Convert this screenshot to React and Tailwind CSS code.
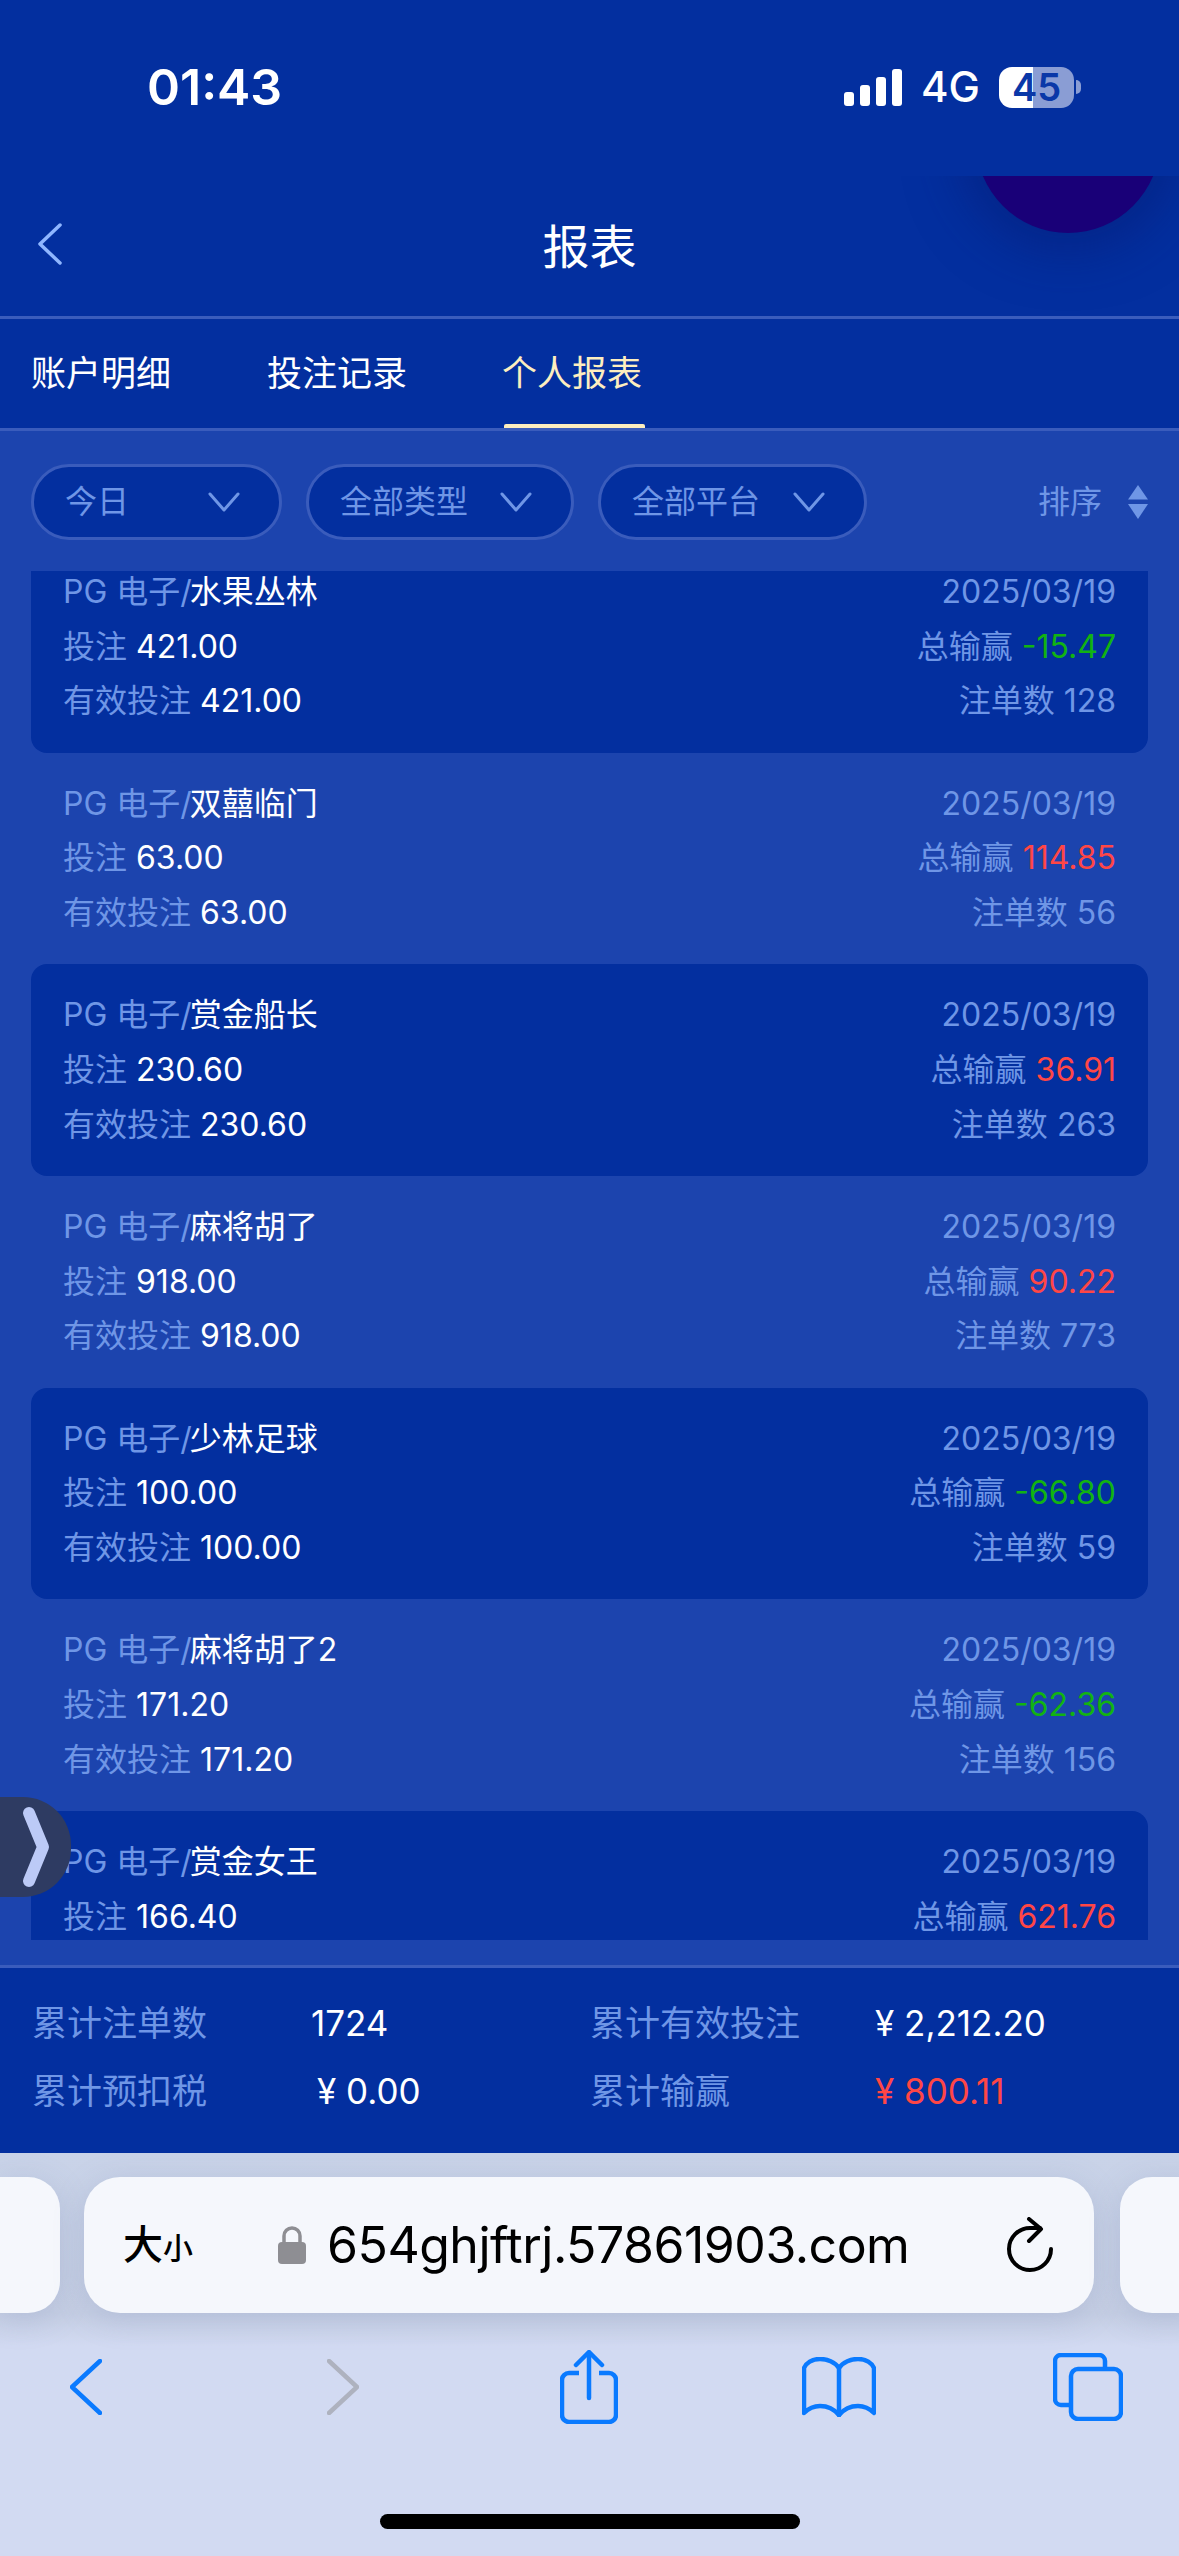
const FONT = "font-['Inter','Noto_Sans_CJK_SC',sans-serif]";

const records = [
  { game: '水果丛林', stake: '421.00', net: '-15.47', count: '128' },
  { game: '双囍临门', stake: '63.00', net: '114.85', count: '56' },
  { game: '赏金船长', stake: '230.60', net: '36.91', count: '263' },
  { game: '麻将胡了', stake: '918.00', net: '90.22', count: '773' },
  { game: '少林足球', stake: '100.00', net: '-66.80', count: '59' },
  { game: '麻将胡了2', stake: '171.20', net: '-62.36', count: '156' },
  { game: '赏金女王', stake: '166.40', net: '621.76', count: '88' },
];

function FilterPill({ label, width }) {
  return (
    <div
      className="h-[76px] flex items-center justify-between rounded-[38px] border-[3px] border-[#3a5cbc] bg-[#032f9f] pl-[31px] pr-[39px] text-[#6f96e6]"
      style={{ width }}
    >
      <span className="text-[32px]">{label}</span>
      <svg width="32" height="22" viewBox="0 0 32 22" fill="none" stroke="#6f96e6" strokeWidth="3" strokeLinecap="round" strokeLinejoin="round">
        <path d="M2 3 L16 19 L30 3" />
      </svg>
    </div>
  );
}

function RecordRow({ row, index }) {
  const loss = row.net.startsWith('-');
  return (
    <div className={`h-[211.7px] shrink-0 rounded-[16px] px-[32px] pt-[24px] text-[32px] leading-[54.7px] text-[#6f96e6] ${index % 2 === 0 ? 'bg-[#032f9f]' : ''}`}>
      <div className="flex justify-between">
        <span>PG 电子/<span className="-ml-[2px] text-white">{row.game}</span></span>
        <span>2025/03/19</span>
      </div>
      <div className="flex justify-between">
        <span>投注 <span className="text-white">{row.stake}</span></span>
        <span>总输赢 <span className={loss ? 'text-[#12b312]' : 'text-[#ff4646]'}>{row.net}</span></span>
      </div>
      <div className="flex justify-between">
        <span>有效投注 <span className="text-white">{row.stake}</span></span>
        <span>注单数 {row.count}</span>
      </div>
    </div>
  );
}

function StatusBar() {
  return (
    <div className="relative z-10 h-[176px] shrink-0 bg-[#032f9f] text-white">
      <div className="flex items-center pl-[147px] pr-[98px] pt-[60px]">
        <span className="text-[50px] font-semibold leading-[54px]">01:43</span>
        <div className="ml-auto flex items-center">
          <svg width="58" height="37" viewBox="0 0 58 37" fill="white">
            <rect x="0" y="23" width="10" height="14" rx="3" />
            <rect x="16" y="16" width="10" height="21" rx="3" />
            <rect x="32" y="8" width="10" height="29" rx="3" />
            <rect x="48" y="0" width="10" height="37" rx="3" />
          </svg>
          <span className="ml-[19px] text-[42px] font-medium leading-[40px]">4G</span>
          <div className="ml-[19px] flex h-[41px] w-[75px] items-center justify-center rounded-[13px] bg-[linear-gradient(90deg,#ffffff_45%,#8a9dd4_45%)] text-[38px] font-semibold text-[#0a38a8]">45</div>
          <div className="ml-[2px] h-[14px] w-[5px] rounded-r-full bg-[#8a9dd4]" />
        </div>
      </div>
    </div>
  );
}

function NavBar() {
  return (
    <div className="relative flex h-[143px] shrink-0 items-center justify-center border-b-[3px] border-[#3a5cbc] bg-[#032f9f] text-white">
      <div className="absolute left-[976px] top-[-127px] h-[184px] w-[184px] rounded-full bg-[#190078] shadow-[0_0_50px_20px_rgba(5,30,120,0.55)]" />
      <svg className="absolute left-[37px] top-[47px]" width="26" height="42" viewBox="0 0 26 42" fill="none" stroke="#8fb6ff" strokeWidth="3.5" strokeLinecap="round" strokeLinejoin="round">
        <path d="M23 2 L3 21 L23 40" />
      </svg>
      <span className="relative text-[47px] leading-none">报表</span>
    </div>
  );
}

function TabBar() {
  return (
    <div className="relative flex h-[112px] shrink-0 items-start border-b-[3px] border-[#3a5cbc] bg-[#032f9f] pl-[31px] pt-[28px] text-[35px] leading-[52px] text-white">
      <span>账户明细</span>
      <span className="ml-[96px]">投注记录</span>
      <span className="ml-[95px] text-[#fdeebf]">个人报表</span>
      <div className="absolute bottom-0 left-[504px] h-[4px] w-[141px] rounded-t-[2px] bg-[#fdeebf]" />
    </div>
  );
}

function FilterBar() {
  return (
    <div className="flex h-[140px] shrink-0 items-start gap-[24px] pl-[31px] pr-[31px] pt-[33px]">
      <FilterPill label="今日" width={251} />
      <FilterPill label="全部类型" width={268} />
      <FilterPill label="全部平台" width={269} />
      <div className="ml-auto flex h-[76px] items-center text-[32px] text-[#6f96e6]">
        <span>排序</span>
        <svg className="ml-[26px]" width="20" height="34" viewBox="0 0 20 34" fill="#6f96e6">
          <path d="M10 0 L20 14.5 L0 14.5 Z" />
          <path d="M0 19 L20 19 L10 34 Z" />
        </svg>
      </div>
    </div>
  );
}

function Totals() {
  return (
    <div className="h-[188px] shrink-0 border-t-[3px] border-[#3a5cbc] bg-[#032f9f] pl-[32px] pt-[21px] text-[35px] leading-[68px] text-[#6f96e6]">
      <div className="grid grid-cols-[279px_279px_285px_1fr]">
        <span>累计注单数</span>
        <span className="text-white">1724</span>
        <span>累计有效投注</span>
        <span className="text-white">¥ 2,212.20</span>
        <span>累计预扣税</span>
        <span className="pl-[6px] text-white">¥ 0.00</span>
        <span>累计输赢</span>
        <span className="text-[#ff4646]">¥ 800.11</span>
      </div>
    </div>
  );
}

function BrowserChrome() {
  return (
    <div className="flex h-[403px] shrink-0 flex-col bg-[linear-gradient(180deg,#c9d3e8_0%,#c6cfe4_40%,#d2daf2_48%,#d2daf2_100%)]">
      <div className="mt-[24px] flex h-[136px] shrink-0">
        <div className="h-full w-[60px] shrink-0 rounded-r-[32px] bg-[#f5f7fc] shadow-[0_6px_30px_rgba(120,135,180,0.25)]" />
        <div className="ml-[24px] flex h-full w-[1010px] shrink-0 items-center rounded-[36px] bg-[#f5f7fc] pl-[39px] pr-[40px] text-black shadow-[0_6px_30px_rgba(120,135,180,0.25)]">
          <span className="w-[155px] shrink-0 font-medium leading-none">
            <span className="text-[40px]">大</span><span className="text-[30px]">小</span>
          </span>
          <svg width="28" height="38" viewBox="0 0 28 38" fill="none">
            <path d="M6 18 V10 a8 8 0 0 1 16 0 V18" stroke="#8e8e93" strokeWidth="3.5" />
            <rect x="0" y="16" width="28" height="22" rx="4" fill="#8e8e93" />
          </svg>
          <span className="ml-[21px] text-[50px] leading-none tracking-[-0.5px]">654ghjftrj.57861903.com</span>
          <svg className="ml-auto" width="48" height="56" viewBox="0 0 48 56" fill="none" stroke="black" strokeWidth="4" strokeLinecap="round" strokeLinejoin="round">
            <path d="M45 32 A21 21 0 1 1 24 11 H34" />
            <path d="M23 2 L35 12 L23 24" />
          </svg>
        </div>
        <div className="ml-[26px] h-full w-[80px] shrink-0 rounded-l-[32px] bg-[#f5f7fc] shadow-[0_6px_30px_rgba(120,135,180,0.25)]" />
      </div>
      <div className="relative mt-[37px] flex h-[74px] shrink-0 items-center pl-[70px]">
        <svg width="32" height="56" viewBox="0 0 32 56" fill="none" stroke="#0a7aff" strokeWidth="4.5" strokeLinecap="round" strokeLinejoin="round">
          <path d="M30 2 L2 28 L30 54" />
        </svg>
        <svg className="ml-[225px]" width="32" height="56" viewBox="0 0 32 56" fill="none" stroke="#aeb2bf" strokeWidth="4.5" strokeLinecap="round" strokeLinejoin="round">
          <path d="M2 2 L30 28 L2 54" />
        </svg>
        <svg className="ml-[201px]" width="58" height="74" viewBox="0 0 58 74" fill="none" stroke="#0a7aff" strokeWidth="4.5" strokeLinecap="round" strokeLinejoin="round">
          <path d="M19 23 H9 a7 7 0 0 0 -7 7 V65 a7 7 0 0 0 7 7 H49 a7 7 0 0 0 7 -7 V30 a7 7 0 0 0 -7 -7 H39" strokeLinecap="butt" />
          <path d="M29 48 V3" />
          <path d="M16 15 L29 2 L42 15" />
        </svg>
        <svg className="ml-[184px]" width="74" height="60" viewBox="0 0 74 60" fill="none" stroke="#0a7aff" strokeWidth="4.5" strokeLinecap="round" strokeLinejoin="round">
          <path d="M37 11 C33 5 25 2 18 2 C10 2 4 6 2 11 V56 C8 50 14 49 18 49 C25 49 32 52 37 58 C42 52 49 49 56 49 C60 49 66 50 72 56 V11 C70 6 64 2 56 2 C49 2 41 5 37 11 Z" />
          <path d="M37 11 V58" />
        </svg>
        <svg className="ml-[177px]" width="70" height="68" viewBox="0 0 70 68" fill="none" stroke="#0a7aff" strokeWidth="4.5" strokeLinecap="round" strokeLinejoin="round">
          <path d="M52 15 V8 a6 6 0 0 0 -6 -6 H8 a6 6 0 0 0 -6 6 V46 a6 6 0 0 0 6 6 H17" />
          <rect x="18" y="16" width="50" height="50" rx="7" />
        </svg>
      </div>
      <div className="mx-auto mt-[90px] h-[15px] w-[420px] rounded-full bg-black" />
    </div>
  );
}

export default function App() {
  return (
    <div className={`relative flex h-[2556px] w-[1179px] flex-col overflow-hidden bg-[#1c44ae] ${FONT}`}>
      <StatusBar />
      <NavBar />
      <TabBar />
      <FilterBar />
      <div className="mx-[31px] flex h-[1369px] shrink-0 flex-col overflow-hidden">
        <div className="-mt-[30px] flex flex-col">
          {records.map((row, i) => (
            <RecordRow key={row.game} row={row} index={i} />
          ))}
        </div>
      </div>
      <div className="h-[25px] shrink-0" />
      <Totals />
      <BrowserChrome />

      {/* Floating side handle */}
      <div className="absolute left-0 top-[1797px] flex h-[100px] w-[71px] items-center rounded-r-[48px] bg-[#2e3b62] pl-[21px]">
        <svg width="30" height="84" viewBox="0 0 30 84" fill="none" stroke="#bccaf7" strokeWidth="12" strokeLinecap="round" strokeLinejoin="round">
          <path d="M8 8 L22 42 L8 76" />
        </svg>
      </div>
    </div>
  );
}
